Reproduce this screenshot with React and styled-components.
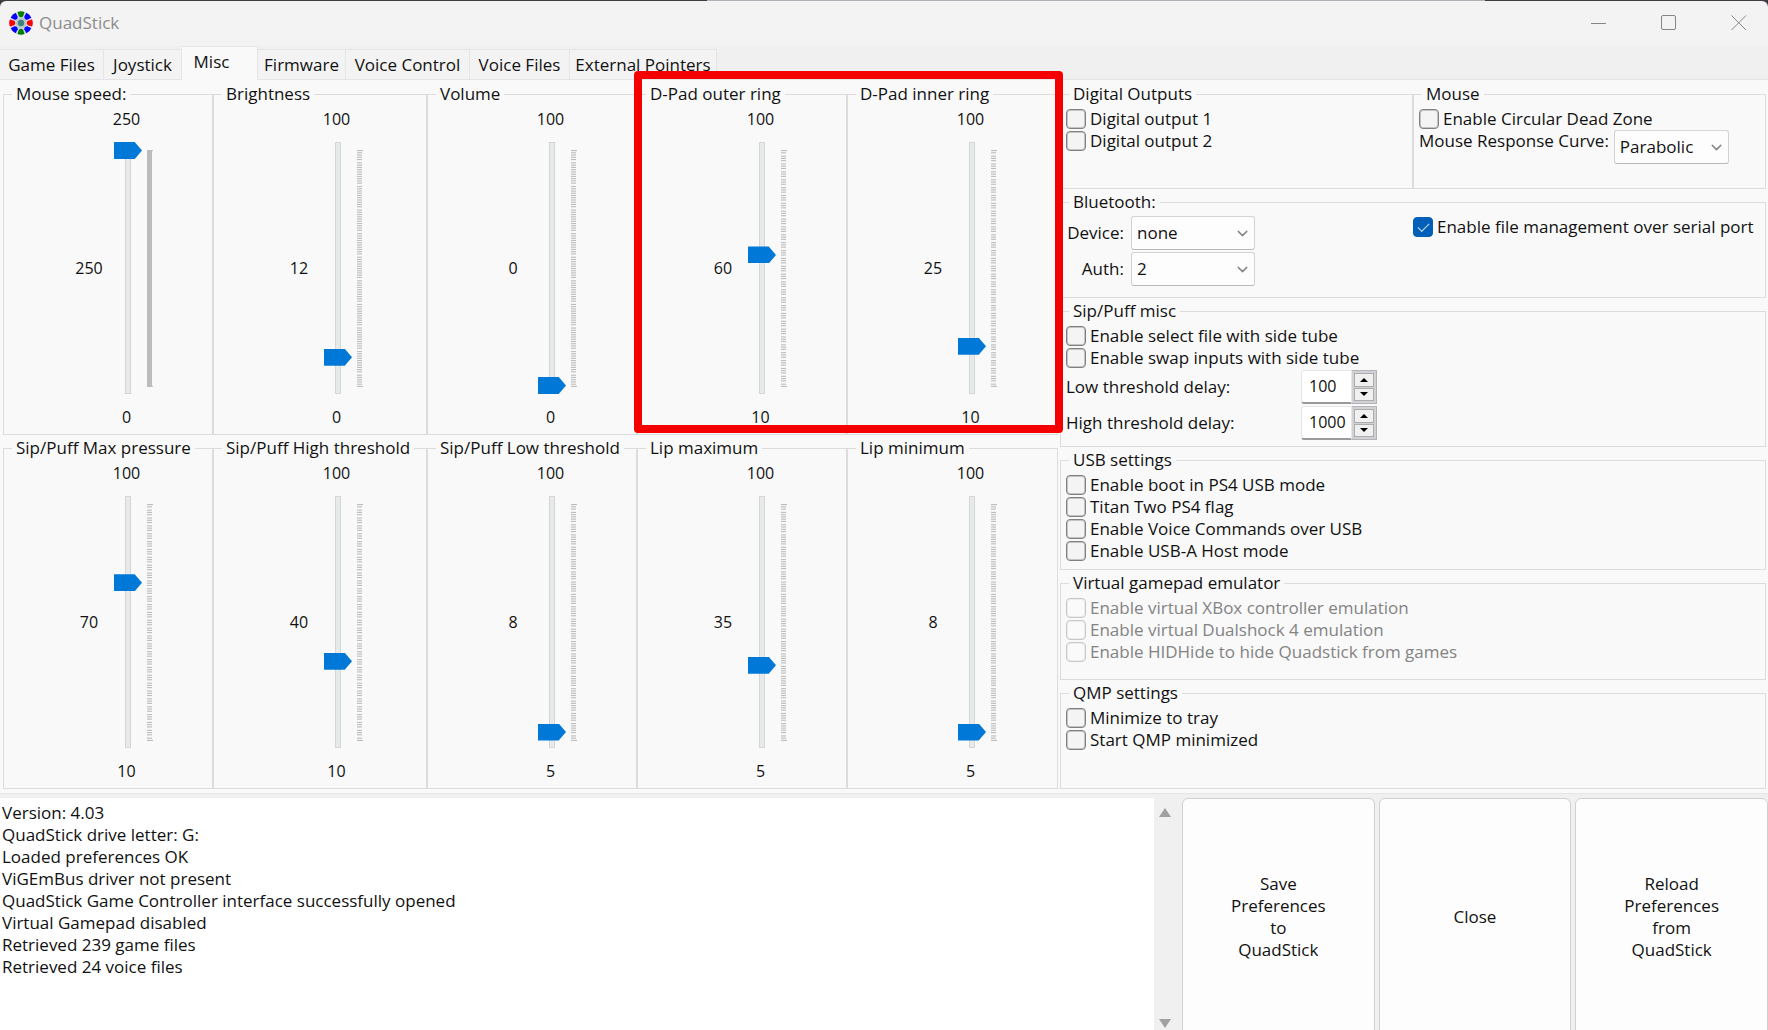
import React from "react";
import styled, { createGlobalStyle } from "styled-components";
import { ChevronDown } from "lucide-react";

const GlobalStyle = createGlobalStyle`
  * {
    box-sizing: border-box;
  }
  body {
    margin: 0;
    background: #f0f0f0;
    color: #111;
    font: 17px/22px "Open Sans", "Noto Sans", sans-serif;
  }
  button, input, select {
    font: inherit;
    color: inherit;
  }
`;

const Window = styled.div`
  display: flex;
  flex-direction: column;
  height: 100vh;
  overflow: hidden;
  background: linear-gradient(90deg, #403c41 40%, #b4b2b8 40%, #b4b2b8 84%, #403c41 84%);
  padding-top: 1px;
`;

const TitleBar = styled.header`
  display: flex;
  align-items: center;
  gap: 6px;
  flex: 0 0 45px;
  padding: 0 6px 2px 9px;
  background: #f3f3f3;
  border-radius: 6px 6px 0 0;
`;

const Title = styled.h1`
  flex: 1;
  margin: 0;
  font-size: 17px;
  font-weight: 400;
  color: #8c8c8c;
`;

const WindowControls = styled.div`
  display: flex;
  gap: 24px;
`;

const WindowButton = styled.button`
  display: flex;
  align-items: center;
  justify-content: center;
  width: 46px;
  height: 32px;
  padding: 0;
  border: 0;
  background: none;
  svg {
    fill: none;
    stroke: #858585;
  }
`;

const Tabs = styled.nav`
  display: flex;
  align-items: flex-end;
  flex: 0 0 34px;
  background: #f0f0f0;
  border-bottom: 1px solid #e5e5e5;
`;

const Tab = styled.button`
  flex: 0 0 ${({ $width }) => $width}px;
  height: 30px;
  padding: 0;
  white-space: nowrap;
  background: #f3f3f3;
  border: 1px solid #e5e5e5;
  border-width: 1px 1px 0 0;
  &[aria-selected="true"] {
    height: 34px;
    margin-bottom: -1px;
    padding: 0 16px 4px 0;
    background: #f9f9f9;
  }
`;

const Panel = styled.main`
  display: grid;
  grid-template-columns: 1055fr 706fr;
  gap: 2px;
  padding: 3px 2px 4px 3px;
  background: #f9f9f9;
  border-bottom: 1px solid #e5e5e5;
`;

const SliderGrid = styled.div`
  position: relative;
  display: grid;
  grid-template-columns: 210fr 214fr 210fr 210fr 211fr;
  grid-template-rows: 1fr 1fr;
  row-gap: 2px;
`;

const Group = styled.fieldset`
  min-width: 0;
  min-height: ${({ $height }) => $height}px;
  margin: 0;
  padding: 0;
  border: 1px solid #dcdcdc;
  legend {
    margin-left: 8px;
    padding: 0 4px;
    white-space: nowrap;
  }
`;

const GroupBody = styled.div`
  padding: 3px 5px 0;
`;

const SliderBody = styled.div`
  display: grid;
  grid-template-columns: 63px 44px 31px 20px;
  grid-template-rows: 34px 252px 40px;
  padding-top: 3px;
  font-size: 16px;
  text-align: center;
`;

const Max = styled.span`
  grid-area: 1 / 3;
`;

const Min = styled.span`
  grid-area: 3 / 3;
  align-self: center;
  padding-top: 6px;
`;

const Value = styled.output`
  grid-area: 2 / 2;
  align-self: center;
`;

const Range = styled.input`
  grid-area: 2 / 3;
  justify-self: end;
  appearance: none;
  writing-mode: vertical-lr;
  direction: rtl;
  width: 28px;
  height: 252px;
  margin: 0;
  background:
    linear-gradient(#e7eaea, #e7eaea) center / 4px 250px no-repeat,
    linear-gradient(#d6d6d6, #d6d6d6) center / 6px 252px no-repeat;
  &::-webkit-slider-thumb {
    appearance: none;
    width: 28px;
    height: 17px;
    background: #0078d7;
    clip-path: polygon(0 0, 74% 0, 100% 50%, 74% 100%, 0 100%);
  }
`;

const TickMarks = styled.svg`
  grid-area: 2 / 4;
  align-self: center;
  margin-left: 5px;
  fill: #bcbcbc;
`;

/* Marker frame laid over the two D-Pad groups */
const Highlight = styled.div`
  position: absolute;
  inset: -12px -5px 2px -3px;
  grid-area: 1 / 4 / 2 / 6;
  border: 8px solid #f50000;
  border-radius: 4px;
  pointer-events: none;
`;

const Settings = styled.div`
  display: flex;
  flex-direction: column;
  gap: 2px;
`;

const Halves = styled.div`
  display: grid;
  grid-template-columns: 1fr 1fr;
`;

const CheckLabel = styled.label`
  display: flex;
  align-items: center;
  gap: 4px;
  height: 22px;
  white-space: nowrap;
  color: ${({ $disabled }) => ($disabled ? "#838383" : "inherit")};
`;

const CheckInput = styled.input`
  appearance: none;
  display: grid;
  place-items: center;
  width: 20px;
  height: 20px;
  margin: 0;
  border: 1px solid #808080;
  border-radius: 4px;
  background: #f4f4f4;
  box-shadow: inset 0 0 0 1px #c4c4c4;
  &:disabled {
    border-color: #c8c8c8;
    background: #fafafa;
    box-shadow: inset 0 0 0 1px #ececec;
  }
  &:checked {
    border-color: #005fb8;
    background: #005fb8;
    box-shadow: none;
  }
  &:checked::after {
    content: "";
    width: 10px;
    height: 5px;
    margin-top: -2px;
    border: solid #cfe2f4;
    border-width: 0 0 1px 1px;
    transform: rotate(-45deg);
  }
`;

const CurveRow = styled.div`
  display: flex;
  gap: 5px;
  white-space: nowrap;
`;

const BluetoothFields = styled.div`
  display: grid;
  grid-template-columns: 58px 124px;
  gap: 2px 7px;
  align-items: center;
  justify-items: end;
`;

const SerialOption = styled.div`
  padding-top: 3px;
`;

const SelectBox = styled.span`
  position: relative;
  display: block;
  width: ${({ $width }) => $width}px;
  select {
    appearance: none;
    width: 100%;
    height: 34px;
    padding: 0 5px;
    border: 1px solid #d2d2d2;
    border-bottom-color: #b8b8b8;
    border-radius: 3px;
    background: #fdfdfd;
  }
  svg {
    position: absolute;
    top: 9px;
    right: 4px;
    pointer-events: none;
  }
`;

const Delays = styled.div`
  display: grid;
  grid-template-columns: 235px 76px;
  row-gap: 2px;
  align-items: center;
  padding-top: 1px;
`;

const Spinner = styled.span`
  display: grid;
  grid-template-columns: 51px 25px;
  height: 34px;
  font-size: 16px;
  input {
    appearance: textfield;
    width: 51px;
    padding: 0 0 2px 7px;
    border: 1px solid #e6e6e6;
    border-bottom: 2px solid #9a9a9a;
    border-radius: 3px 0 0 3px;
    background: #fff;
  }
  input::-webkit-inner-spin-button {
    display: none;
  }
`;

const SpinButtons = styled.span`
  display: grid;
  grid-template-rows: 1fr 1fr;
  gap: 1px;
  padding: 2px;
  border: 1px solid #b4b4b8;
  border-left: 0;
  background: #d2d2d6;
  button {
    display: grid;
    place-items: center;
    padding: 0;
    border: 1px solid #acacac;
    background: #f0f0f0;
  }
`;

const Footer = styled.footer`
  display: grid;
  grid-template-columns: 1178fr 586fr;
  gap: 4px;
  flex: 1 0 242px;
  padding-top: 4px;
  background: #f0f0f0;
`;

const Log = styled.section`
  display: flex;
  background: #fff;
`;

const LogText = styled.div`
  flex: 1;
  padding: 4px 2px;
  p {
    margin: 0;
  }
`;

const ScrollBar = styled.div`
  display: flex;
  flex-direction: column;
  justify-content: space-between;
  align-items: center;
  width: 24px;
  padding: 10px 2px 8px 0;
  background: #f0f0f0;
`;

const Actions = styled.div`
  display: grid;
  grid-template-columns: repeat(3, 1fr);
  gap: 4px;
`;

const ActionButton = styled.button`
  padding: 0;
  border: 1px solid #d0d0d0;
  border-radius: 6px;
  background: #fdfdfd;
  white-space: pre-line;
`;

const tabs = [
  ["Game Files", 104],
  ["Joystick", 78],
  ["Misc", 76],
  ["Firmware", 88],
  ["Voice Control", 124],
  ["Voice Files", 100],
  ["External Pointers", 147],
];

const sliders = [
  { label: "Mouse speed:", min: 0, max: 250, value: 250 },
  { label: "Brightness", min: 0, max: 100, value: 12 },
  { label: "Volume", min: 0, max: 100, value: 0 },
  { label: "D-Pad outer ring", min: 10, max: 100, value: 60 },
  { label: "D-Pad inner ring", min: 10, max: 100, value: 25 },
  { label: "Sip/Puff Max pressure", min: 10, max: 100, value: 70 },
  { label: "Sip/Puff High threshold", min: 10, max: 100, value: 40 },
  { label: "Sip/Puff Low threshold", min: 5, max: 100, value: 8 },
  { label: "Lip maximum", min: 5, max: 100, value: 35 },
  { label: "Lip minimum", min: 5, max: 100, value: 8 },
];

const logLines = [
  "Version: 4.03",
  "QuadStick drive letter: G:",
  "Loaded preferences OK",
  "ViGEmBus driver not present",
  "QuadStick Game Controller interface successfully opened",
  "Virtual Gamepad disabled",
  "Retrieved 239 game files",
  "Retrieved 24 voice files",
];

const petals = ["#008000", "#0000ff", "#ff0000", "#0000ff", "#008000", "#0000ff", "#ff0000", "#0000ff"];

const Logo = () => (
  <svg width="24" height="24" viewBox="0 0 24 24" aria-hidden="true">
    <circle cx="12" cy="12" r="11.5" fill="#d4d4ea" />
    {petals.map((color, i) => (
      <path key={i} d="M8.5 0.9 Q12 -0.5 15.5 0.9 L14.2 5.2 Q12 7.4 9.8 5.2 Z" fill={color} transform={`rotate(${i * 45} 12 12)`} />
    ))}
    <circle cx="12" cy="12" r="5.6" fill="#b4ccc4" />
    <circle cx="12" cy="12" r="3.2" fill="#3f8080" />
  </svg>
);

const TICK_SPAN = 210;

const Ticks = ({ count }) => (
  <TickMarks width="6" height="237" viewBox="0 0 6 211" preserveAspectRatio="none">
    <rect width="6" height="1" />
    <rect y={TICK_SPAN} width="6" height="1" />
    {count > TICK_SPAN ? (
      <rect width="5" height={TICK_SPAN + 1} />
    ) : (
      Array.from({ length: count - 1 }, (_, i) => (
        <rect key={i} y={Math.round(((i + 1) * TICK_SPAN) / count)} width="5" height="1" />
      ))
    )}
  </TickMarks>
);

const Slider = ({ label, min, max, value }) => {
  const [current, setCurrent] = React.useState(value);
  return (
    <Group>
      <legend>{label}</legend>
      <SliderBody>
        <Max>{max}</Max>
        <Value>{current}</Value>
        <Range
          type="range"
          aria-label={label}
          min={min}
          max={max}
          value={current}
          onChange={(e) => setCurrent(Number(e.target.value))}
        />
        <Ticks count={max - min} />
        <Min>{min}</Min>
      </SliderBody>
    </Group>
  );
};

const Check = ({ children, disabled, checked }) => (
  <CheckLabel $disabled={disabled}>
    <CheckInput type="checkbox" disabled={disabled} defaultChecked={checked} />
    {children}
  </CheckLabel>
);

const Select = ({ id, width, options }) => (
  <SelectBox $width={width}>
    <select id={id}>
      {options.map((option) => (
        <option key={option}>{option}</option>
      ))}
    </select>
    <ChevronDown size={17} strokeWidth={2} color="#858585" />
  </SelectBox>
);

const Triangle = ({ down, width = 8, height = 4, color = "#000" }) => (
  <svg width={width} height={height} viewBox="0 0 8 4" preserveAspectRatio="none">
    <path d={down ? "M0 0H8L4 4Z" : "M0 4H8L4 0Z"} fill={color} />
  </svg>
);

const Delay = ({ id, label, value }) => {
  const [delay, setDelay] = React.useState(value);
  return (
    <>
      <label htmlFor={id}>{label}</label>
      <Spinner>
        <input id={id} type="number" value={delay} onChange={(e) => setDelay(Number(e.target.value))} />
        <SpinButtons>
          <button type="button" aria-label="Increase" onClick={() => setDelay(delay + 1)}>
            <Triangle />
          </button>
          <button type="button" aria-label="Decrease" onClick={() => setDelay(delay - 1)}>
            <Triangle down />
          </button>
        </SpinButtons>
      </Spinner>
    </>
  );
};

const App = () => (
  <Window>
    <GlobalStyle />
    <TitleBar>
      <Logo />
      <Title>QuadStick</Title>
      <WindowControls>
        <WindowButton aria-label="Minimize">
          <svg width="16" height="16"><path d="M0 8.5H15" /></svg>
        </WindowButton>
        <WindowButton aria-label="Maximize">
          <svg width="16" height="16"><rect x="0.5" y="0.5" width="14" height="14" rx="1.5" /></svg>
        </WindowButton>
        <WindowButton aria-label="Close window">
          <svg width="16" height="16"><path d="M0.5 0.5L15 15M15 0.5L0.5 15" /></svg>
        </WindowButton>
      </WindowControls>
    </TitleBar>
    <Tabs role="tablist">
      {tabs.map(([name, width]) => (
        <Tab key={name} role="tab" aria-selected={name === "Misc"} $width={width}>
          {name}
        </Tab>
      ))}
    </Tabs>
    <Panel>
      <SliderGrid>
        {sliders.map((slider) => (
          <Slider key={slider.label} {...slider} />
        ))}
        <Highlight />
      </SliderGrid>
      <Settings>
        <Halves>
          <Group $height={106}>
            <legend>Digital Outputs</legend>
            <GroupBody>
              <Check>Digital output 1</Check>
              <Check>Digital output 2</Check>
            </GroupBody>
          </Group>
          <Group $height={106}>
            <legend>Mouse</legend>
            <GroupBody>
              <Check>Enable Circular Dead Zone</Check>
              <CurveRow>
                <label htmlFor="curve">Mouse Response Curve:</label>
                <Select id="curve" width={115} options={["Parabolic", "Linear"]} />
              </CurveRow>
            </GroupBody>
          </Group>
        </Halves>
        <Group $height={107}>
          <legend>Bluetooth:</legend>
          <Halves>
            <GroupBody>
              <BluetoothFields>
                <label htmlFor="device">Device:</label>
                <Select id="device" width={124} options={["none"]} />
                <label htmlFor="auth">Auth:</label>
                <Select id="auth" width={124} options={["2", "1", "0"]} />
              </BluetoothFields>
            </GroupBody>
            <SerialOption>
              <Check checked>Enable file management over serial port</Check>
            </SerialOption>
          </Halves>
        </Group>
        <Group $height={147}>
          <legend>Sip/Puff misc</legend>
          <GroupBody>
            <Check>Enable select file with side tube</Check>
            <Check>Enable swap inputs with side tube</Check>
            <Delays>
              <Delay id="low-delay" label="Low threshold delay:" value={100} />
              <Delay id="high-delay" label="High threshold delay:" value={1000} />
            </Delays>
          </GroupBody>
        </Group>
        <Group $height={121}>
          <legend>USB settings</legend>
          <GroupBody>
            <Check>Enable boot in PS4 USB mode</Check>
            <Check>Titan Two PS4 flag</Check>
            <Check>Enable Voice Commands over USB</Check>
            <Check>Enable USB-A Host mode</Check>
          </GroupBody>
        </Group>
        <Group $height={108}>
          <legend>Virtual gamepad emulator</legend>
          <GroupBody>
            <Check disabled>Enable virtual XBox controller emulation</Check>
            <Check disabled>Enable virtual Dualshock 4 emulation</Check>
            <Check disabled>Enable HIDHide to hide Quadstick from games</Check>
          </GroupBody>
        </Group>
        <Group $height={107}>
          <legend>QMP settings</legend>
          <GroupBody>
            <Check>Minimize to tray</Check>
            <Check>Start QMP minimized</Check>
          </GroupBody>
        </Group>
      </Settings>
    </Panel>
    <Footer>
      <Log>
        <LogText role="log">
          {logLines.map((line) => (
            <p key={line}>{line}</p>
          ))}
        </LogText>
        <ScrollBar>
          <Triangle width={12} height={9} color="#a0a0a0" />
          <Triangle down width={12} height={9} color="#a0a0a0" />
        </ScrollBar>
      </Log>
      <Actions>
        <ActionButton>{"Save\nPreferences\nto\nQuadStick"}</ActionButton>
        <ActionButton>Close</ActionButton>
        <ActionButton>{"Reload\nPreferences\nfrom\nQuadStick"}</ActionButton>
      </Actions>
    </Footer>
  </Window>
);

export default App;
